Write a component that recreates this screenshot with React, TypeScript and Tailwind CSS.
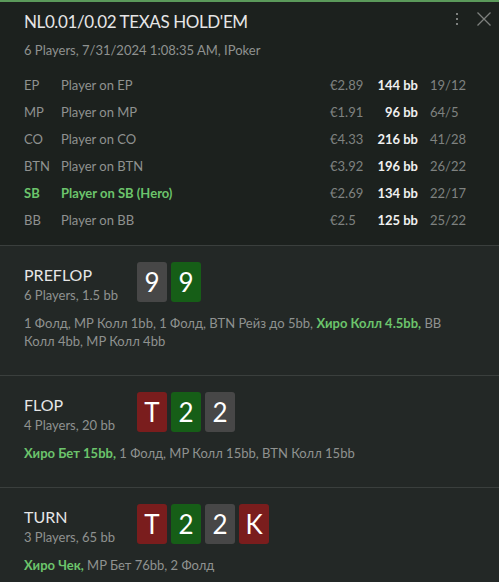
import React from 'react';

type Seat = { pos: string; name: string; stack: string; bb: string; stat: string; hero?: boolean };

const seats: Seat[] = [
  { pos: 'EP', name: 'Player on EP', stack: '€2.89', bb: '144 bb', stat: '19/12' },
  { pos: 'MP', name: 'Player on MP', stack: '€1.91', bb: '96 bb', stat: '64/5' },
  { pos: 'CO', name: 'Player on CO', stack: '€4.33', bb: '216 bb', stat: '41/28' },
  { pos: 'BTN', name: 'Player on BTN', stack: '€3.92', bb: '196 bb', stat: '26/22' },
  { pos: 'SB', name: 'Player on SB (Hero)', stack: '€2.69', bb: '134 bb', stat: '22/17', hero: true },
  { pos: 'BB', name: 'Player on BB', stack: '€2.5', bb: '125 bb', stat: '25/22' },
];

type Card = { v: string; c: 'gray' | 'green' | 'red' };

const cardBg = {
  gray: 'bg-[#474747]',
  green: 'bg-[#165e17]',
  red: 'bg-[#7a1d1d]',
};

type Street = {
  name: string;
  sub: string;
  cards: Card[];
  hero: string;
  before?: string;
  after: string;
};

const streets: Street[] = [
  {
    name: 'PREFLOP',
    sub: '6 Players, 1.5 bb',
    cards: [{ v: '9', c: 'gray' }, { v: '9', c: 'green' }],
    before: '1 Фолд, MP Колл 1bb, 1 Фолд, BTN Рейз до 5bb, ',
    hero: 'Хиро Колл 4.5bb,',
    after: ' BB Колл 4bb, MP Колл 4bb',
  },
  {
    name: 'FLOP',
    sub: '4 Players, 20 bb',
    cards: [{ v: 'T', c: 'red' }, { v: '2', c: 'green' }, { v: '2', c: 'gray' }],
    hero: 'Хиро Бет 15bb,',
    after: ' 1 Фолд, MP Колл 15bb, BTN Колл 15bb',
  },
  {
    name: 'TURN',
    sub: '3 Players, 65 bb',
    cards: [{ v: 'T', c: 'red' }, { v: '2', c: 'green' }, { v: '2', c: 'gray' }, { v: 'K', c: 'red' }],
    hero: 'Хиро Чек,',
    after: ' MP Бет 76bb, 2 Фолд',
  },
];

export default function App() {
  return (
    <div className="w-[499px] h-[582px] overflow-hidden bg-[#232826] font-['Lato',sans-serif]">
      <div className="h-[2px] bg-[#5b9a5b]" />

      {/* Hand header */}
      <header className="bg-[#1c211e] px-6 pt-2 pb-[11px]">
        <div className="flex items-center justify-between">
          <h1 className="text-[17px] leading-6 tracking-[-0.4px] text-[#e6e6e6]">NL0.01/0.02 TEXAS HOLD'EM</h1>
          <div className="flex items-center gap-[17px] -mr-[17px] -mt-[6px]">
            <svg width="4" height="14" viewBox="0 0 4 14" className="text-[#7d807e]">
              <rect x="1" y="1" width="2" height="2" fill="currentColor" />
              <rect x="1" y="6" width="2" height="2" fill="currentColor" />
              <rect x="1" y="11" width="2" height="2" fill="currentColor" />
            </svg>
            <svg width="16" height="16" viewBox="0 0 16 16" className="text-[#7d807e]">
              <path d="M1.5 1.5 L14.5 14.5 M14.5 1.5 L1.5 14.5" stroke="currentColor" strokeWidth="1.3" />
            </svg>
          </div>
        </div>
        <p className="mt-1.5 text-[13px] leading-5 text-[#8f9290]">6 Players, 7/31/2024 1:08:35 AM, IPoker</p>

        <div className="mt-3">
          {seats.map((s) => (
            <div key={s.pos} className="flex h-[27px] items-center whitespace-nowrap text-[13px]">
              <span className={`w-[37px] ${s.hero ? 'font-bold text-[#6cc46c]' : 'text-[#8f9290]'}`}>{s.pos}</span>
              <span className={`flex-1 ${s.hero ? 'font-bold text-[#6cc46c]' : 'text-[#8f9290]'}`}>{s.name}</span>
              <span className="w-[40px] text-[#7f8280]">{s.stack}</span>
              <span className="w-[48px] text-right font-bold text-[#f0f0f0]">{s.bb}</span>
              <span className="w-[57px] pl-3 text-[#7f8280]">{s.stat}</span>
            </div>
          ))}
        </div>
      </header>

      {streets.map((st) => (
        <section key={st.name} className="border-t border-[#3a3f3d] px-6 pt-4 pb-[25px]">
          <div className="flex">
            <div className="w-[113px] pt-[2px]">
              <div className="text-[16px] leading-[22px] text-[#e6e6e6]">{st.name}</div>
              <div className="text-[13px] leading-[18px] text-[#8f9290]">{st.sub}</div>
            </div>
            <div className="flex gap-1">
              {st.cards.map((c, i) => (
                <div
                  key={i}
                  className={`flex h-10 w-[30px] items-center justify-center rounded-[3px] text-[26px] text-white ${cardBg[c.c]}`}
                >
                  {c.v}
                </div>
              ))}
            </div>
          </div>
          <p className="mt-[10px] text-[13px] leading-[18px] text-[#8f9290]">
            {st.before}
            <span className="font-bold text-[#6cc46c]">{st.hero}</span>
            {st.after}
          </p>
        </section>
      ))}
    </div>
  );
}
